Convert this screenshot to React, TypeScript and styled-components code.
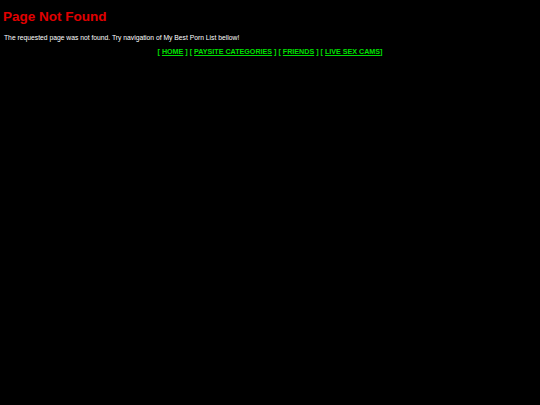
import React from 'react';
import styled, { createGlobalStyle } from 'styled-components';

const GlobalStyle = createGlobalStyle`
  html, body {
    margin: 0;
    padding: 0;
    background: #000;
  }
  body {
    font-family: "Liberation Sans", Arial, sans-serif;
    color: #fff;
  }
`;

const Page = styled.div`
  padding: 0 4px;
  min-height: 405px;
  background: #000;
`;

const Title = styled.h1`
  margin: 0 0 0 -1px;
  padding-top: 9px;
  font-size: 13.5px;
  line-height: 16px;
  font-weight: bold;
  color: #e00000;
`;

const Message = styled.p`
  margin: 8px 0 0;
  font-size: 6.75px;
  line-height: 9px;
  color: #fff;
`;

const Nav = styled.div`
  margin-top: 5px;
  text-align: center;
  font-size: 7.15px;
  line-height: 10px;
  font-weight: bold;
  color: #00e000;
`;

const NavLink = styled.a`
  color: #00e000;
  text-decoration: underline;
`;

const links = ['HOME', 'PAYSITE CATEGORIES', 'FRIENDS', 'LIVE SEX CAMS'];

export default function App() {
  return (
    <Page>
      <GlobalStyle />
      <Title>Page Not Found</Title>
      <Message>
        The requested page was not found. Try navigation of My Best Porn List bellow!
      </Message>
      <Nav>
        {links.map((label, i) => (
          <React.Fragment key={label}>
            {i > 0 && ' '}
            [ <NavLink href="#">{label}</NavLink>
            {i === links.length - 1 ? ']' : ' ]'}
          </React.Fragment>
        ))}
      </Nav>
    </Page>
  );
}
